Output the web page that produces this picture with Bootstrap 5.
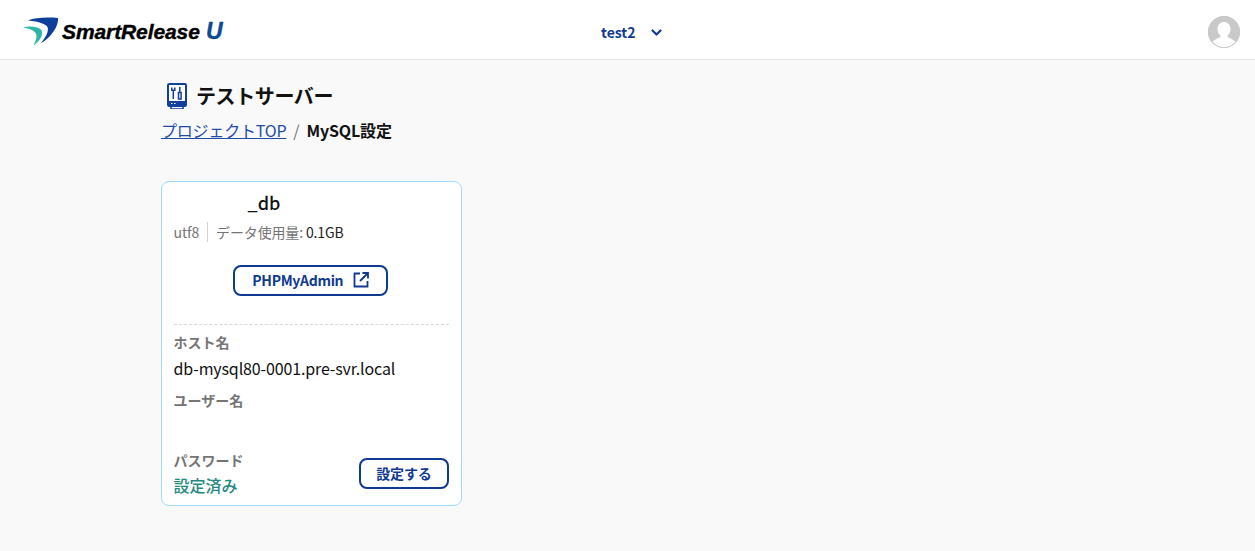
<!DOCTYPE html>
<html lang="ja">
<head>
<meta charset="utf-8">
<title>MySQL設定</title>
<link href="https://cdn.jsdelivr.net/npm/bootstrap@5.3.0/dist/css/bootstrap.min.css" rel="stylesheet">
<style>
html,body{height:100%}
body{background:#f9f9f9;font-family:"Noto Sans CJK JP","Noto Sans",sans-serif;color:#111;font-size:16px;overflow:hidden}
.topbar{height:60px;background:#fff;border-bottom:1px solid #e4e4e4;padding:3px 15px 0 23px}
.brand{width:202px;gap:4px}
.brand-name{font-family:"Liberation Sans",sans-serif;font-weight:700;font-style:italic;font-size:21px;letter-spacing:-.1px;color:#000;line-height:1;-webkit-text-stroke:.4px #000}
.brand-name span{color:#0d4a94;-webkit-text-stroke:.4px #0d4a94;font-size:23px}
.project{left:601px;top:3px;height:59px;color:#0f3a8f;font-weight:700;font-size:14px;gap:15px}
.page{padding-left:161px;padding-top:20px}
.title{font-size:20px;font-weight:700;line-height:32px;letter-spacing:-.4px;margin:0 0 0 6px;gap:9px;color:#111}
.crumbs{margin-top:6px;font-size:16px;line-height:24px;gap:7px;letter-spacing:-.2px}
.crumbs a{color:#1f4ca8}
.crumbs .sep{color:#6c757d}
.crumbs b{font-size:16px;font-weight:700;letter-spacing:-.15px}
.dbcard{width:301px;height:325px;margin-top:39px;background:#fff;border:1px solid #9cdcff;border-radius:8px;padding:6px 12px 0 11.6px}
.dbname{font-size:18px;font-weight:500;line-height:28px;padding-left:74px}
.meta{font-size:14px;line-height:20px;color:#757575;margin-top:6px;letter-spacing:-.15px}
.meta .lang{padding-right:8px;border-right:1px solid #d5d5d5;margin-right:8px}
.meta b{font-weight:400;color:#222}
.outline-navy{border:2px solid #0f3a8f;border-radius:8px;color:#0f3a8f;background:#fff;font-weight:700;font-size:14px;line-height:20px;padding:3px 15.5px 4px;letter-spacing:-.2px}
.outline-navy.wide{padding-left:17px;padding-right:17px;gap:10px;letter-spacing:-.3px;margin-right:1px}
.outline-navy:hover{background:#eef3fb;color:#0f3a8f;border-color:#0f3a8f}
.admin-wrap{margin-top:23px;padding-bottom:28px;border-bottom:1px dashed #d8d8d8}
.field-label{font-size:14px;font-weight:700;color:#757575;line-height:20px}
.field-value{font-size:16px;line-height:24px;margin-top:4px;letter-spacing:-.14px}
.host{margin-top:7px}
.user{margin-top:10px;height:60px}
.done{color:#1f8a80;font-size:16px;line-height:24px;margin-top:3px;font-weight:500}
.avatar{width:32px;height:32px;border-radius:50%;overflow:hidden;background:#c9c9c9;display:block;margin-top:1px}
</style>
</head>
<body>
<header class="topbar d-flex align-items-center justify-content-between position-relative">
  <div class="brand d-flex align-items-center">
    <svg width="35" height="30" viewBox="0 0 35 30" class="flex-shrink-0" aria-hidden="true">
      <path d="M5 4.500C12 1.500 24 1 35 2c.5 6-2.500 12-8 18-2.500 2.700-6 5.500-9 7 4-5 7.500-10 6.800-15C24 8 16 5.500 5 4.500z" fill="#0f3f9c"/>
      <path d="M0 11.500c7-1.800 14-.8 17.500 1.800 2.500 2 2 6.500-1 10.500-1.500 2-3.500 4-6 5.700 2-4 3.500-8 2.800-11C12.500 15 7 12.500 0 11.500z" fill="#2db8a5"/>
    </svg>
    <span class="brand-name">SmartRelease<span> U</span></span>
  </div>
  <div class="project position-absolute d-flex align-items-center">
    <span>test2</span>
    <svg width="11" height="8" viewBox="0 0 11 8" aria-hidden="true"><path d="M1.500 1.500l4 4 4-4" fill="none" stroke="#0f3a8f" stroke-width="2.200" stroke-linecap="round" stroke-linejoin="round"/></svg>
  </div>
  <svg class="avatar" viewBox="0 0 32 32" aria-hidden="true">
    <rect width="32" height="32" fill="#c9c9c9"/>
    <path d="M16 6c4 0 6.500 3 6.500 7 0 3-1.300 5.300-3 6.500v1.500c3 1.500 6.500 2.500 8 5-3 3-7.500 5-11.500 5s-8.500-2-11.500-5c1.500-2.500 5-3.500 8-5v-1.500c-1.700-1.200-3-3.500-3-6.500 0-4 2.500-7 6.500-7z" fill="#fff"/>
  </svg>
</header>
<main class="page">
  <h1 class="title d-flex align-items-center">
    <svg width="20" height="26" viewBox="0 0 20 26" aria-hidden="true">
      <rect x="1" y="1" width="18" height="22" rx="1.200" fill="#fff" stroke="#123f9c" stroke-width="2"/>
      <rect x="1" y="18" width="18" height="5" fill="#123f9c"/>
      <path d="M4 20.500h1.500M7 20.500h1.500" stroke="#fff" stroke-width="1.200"/>
      <path d="M4 24v2h12v-2" fill="none" stroke="#123f9c" stroke-width="1.500"/>
      <path d="M4.800 4.500v2.800h3V4.500M6.300 7.300V16M12.800 4v5.500M11.500 9.500h2.600V16h-2.600z" fill="none" stroke="#123f9c" stroke-width="1.500"/>
    </svg>
    <span>テストサーバー</span>
  </h1>
  <nav class="crumbs d-flex align-items-center" aria-label="breadcrumb">
    <a href="#">プロジェクトTOP</a><span class="sep">/</span><b>MySQL設定</b>
  </nav>
  <section class="dbcard">
    <div class="dbname">_db</div>
    <div class="meta d-flex align-items-center"><span class="lang">utf8</span><span>データ使用量: <b>0.1GB</b></span></div>
    <div class="admin-wrap d-flex justify-content-center">
      <a href="#" class="btn outline-navy wide d-inline-flex align-items-center">PHPMyAdmin
        <svg width="16" height="16" viewBox="0 0 16 16" aria-hidden="true"><path d="M7 1.500H1.500v13h13V9M9.500 1h5.500v5.500M14.500 1.500L7 9" fill="none" stroke="#0f3a8f" stroke-width="1.800"/></svg>
      </a>
    </div>
    <div class="host">
      <div class="field-label">ホスト名</div>
      <div class="field-value">db-mysql80-0001.pre-svr.local</div>
    </div>
    <div class="user">
      <div class="field-label">ユーザー名</div>
    </div>
    <div class="d-flex justify-content-between align-items-end">
      <div>
        <div class="field-label">パスワード</div>
        <div class="done">設定済み</div>
      </div>
      <a href="#" class="btn outline-navy mb-2">設定する</a>
    </div>
  </section>
</main>
<script src="https://cdn.jsdelivr.net/npm/bootstrap@5.3.0/dist/js/bootstrap.bundle.min.js"></script>
</body>
</html>
